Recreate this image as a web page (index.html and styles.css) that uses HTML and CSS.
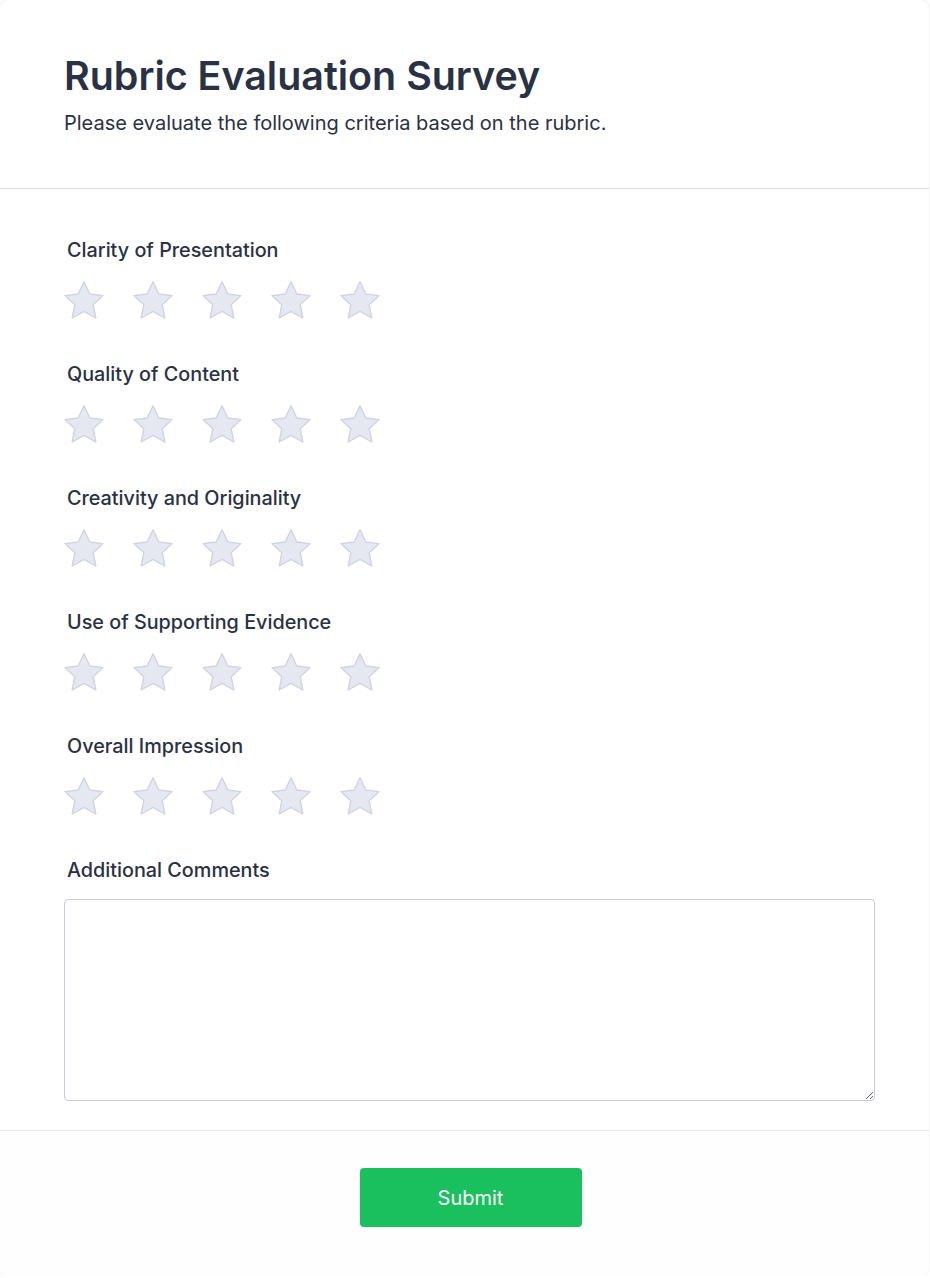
FILE: index.html
```html
<!DOCTYPE html>
<html lang="en">
<head>
<meta charset="utf-8">
<title>Rubric Evaluation Survey</title>
<link rel="stylesheet" href="styles.css">
</head>
<body>
<div class="card">
  <header class="card-header">
    <h1 class="title">Rubric Evaluation Survey</h1>
    <p class="subtitle">Please evaluate the following criteria based on the rubric.</p>
  </header>
  <main class="card-body">
    <div class="question">
      <label class="q-label">Clarity of Presentation</label>
      <div class="stars">
        <svg class="star" viewBox="2 1.7 20 20"><path d="M12 2.6l2.9 6.1 6.6.8-4.9 4.6 1.3 6.6L12 17.4l-5.9 3.3 1.3-6.6-4.9-4.6 6.6-.8z"/></svg>
        <svg class="star" viewBox="2 1.7 20 20"><path d="M12 2.6l2.9 6.1 6.6.8-4.9 4.6 1.3 6.6L12 17.4l-5.9 3.3 1.3-6.6-4.9-4.6 6.6-.8z"/></svg>
        <svg class="star" viewBox="2 1.7 20 20"><path d="M12 2.6l2.9 6.1 6.6.8-4.9 4.6 1.3 6.6L12 17.4l-5.9 3.3 1.3-6.6-4.9-4.6 6.6-.8z"/></svg>
        <svg class="star" viewBox="2 1.7 20 20"><path d="M12 2.6l2.9 6.1 6.6.8-4.9 4.6 1.3 6.6L12 17.4l-5.9 3.3 1.3-6.6-4.9-4.6 6.6-.8z"/></svg>
        <svg class="star" viewBox="2 1.7 20 20"><path d="M12 2.6l2.9 6.1 6.6.8-4.9 4.6 1.3 6.6L12 17.4l-5.9 3.3 1.3-6.6-4.9-4.6 6.6-.8z"/></svg>
      </div>
    </div>
    <div class="question">
      <label class="q-label">Quality of Content</label>
      <div class="stars">
        <svg class="star" viewBox="2 1.7 20 20"><path d="M12 2.6l2.9 6.1 6.6.8-4.9 4.6 1.3 6.6L12 17.4l-5.9 3.3 1.3-6.6-4.9-4.6 6.6-.8z"/></svg>
        <svg class="star" viewBox="2 1.7 20 20"><path d="M12 2.6l2.9 6.1 6.6.8-4.9 4.6 1.3 6.6L12 17.4l-5.9 3.3 1.3-6.6-4.9-4.6 6.6-.8z"/></svg>
        <svg class="star" viewBox="2 1.7 20 20"><path d="M12 2.6l2.9 6.1 6.6.8-4.9 4.6 1.3 6.6L12 17.4l-5.9 3.3 1.3-6.6-4.9-4.6 6.6-.8z"/></svg>
        <svg class="star" viewBox="2 1.7 20 20"><path d="M12 2.6l2.9 6.1 6.6.8-4.9 4.6 1.3 6.6L12 17.4l-5.9 3.3 1.3-6.6-4.9-4.6 6.6-.8z"/></svg>
        <svg class="star" viewBox="2 1.7 20 20"><path d="M12 2.6l2.9 6.1 6.6.8-4.9 4.6 1.3 6.6L12 17.4l-5.9 3.3 1.3-6.6-4.9-4.6 6.6-.8z"/></svg>
      </div>
    </div>
    <div class="question">
      <label class="q-label">Creativity and Originality</label>
      <div class="stars">
        <svg class="star" viewBox="2 1.7 20 20"><path d="M12 2.6l2.9 6.1 6.6.8-4.9 4.6 1.3 6.6L12 17.4l-5.9 3.3 1.3-6.6-4.9-4.6 6.6-.8z"/></svg>
        <svg class="star" viewBox="2 1.7 20 20"><path d="M12 2.6l2.9 6.1 6.6.8-4.9 4.6 1.3 6.6L12 17.4l-5.9 3.3 1.3-6.6-4.9-4.6 6.6-.8z"/></svg>
        <svg class="star" viewBox="2 1.7 20 20"><path d="M12 2.6l2.9 6.1 6.6.8-4.9 4.6 1.3 6.6L12 17.4l-5.9 3.3 1.3-6.6-4.9-4.6 6.6-.8z"/></svg>
        <svg class="star" viewBox="2 1.7 20 20"><path d="M12 2.6l2.9 6.1 6.6.8-4.9 4.6 1.3 6.6L12 17.4l-5.9 3.3 1.3-6.6-4.9-4.6 6.6-.8z"/></svg>
        <svg class="star" viewBox="2 1.7 20 20"><path d="M12 2.6l2.9 6.1 6.6.8-4.9 4.6 1.3 6.6L12 17.4l-5.9 3.3 1.3-6.6-4.9-4.6 6.6-.8z"/></svg>
      </div>
    </div>
    <div class="question">
      <label class="q-label">Use of Supporting Evidence</label>
      <div class="stars">
        <svg class="star" viewBox="2 1.7 20 20"><path d="M12 2.6l2.9 6.1 6.6.8-4.9 4.6 1.3 6.6L12 17.4l-5.9 3.3 1.3-6.6-4.9-4.6 6.6-.8z"/></svg>
        <svg class="star" viewBox="2 1.7 20 20"><path d="M12 2.6l2.9 6.1 6.6.8-4.9 4.6 1.3 6.6L12 17.4l-5.9 3.3 1.3-6.6-4.9-4.6 6.6-.8z"/></svg>
        <svg class="star" viewBox="2 1.7 20 20"><path d="M12 2.6l2.9 6.1 6.6.8-4.9 4.6 1.3 6.6L12 17.4l-5.9 3.3 1.3-6.6-4.9-4.6 6.6-.8z"/></svg>
        <svg class="star" viewBox="2 1.7 20 20"><path d="M12 2.6l2.9 6.1 6.6.8-4.9 4.6 1.3 6.6L12 17.4l-5.9 3.3 1.3-6.6-4.9-4.6 6.6-.8z"/></svg>
        <svg class="star" viewBox="2 1.7 20 20"><path d="M12 2.6l2.9 6.1 6.6.8-4.9 4.6 1.3 6.6L12 17.4l-5.9 3.3 1.3-6.6-4.9-4.6 6.6-.8z"/></svg>
      </div>
    </div>
    <div class="question">
      <label class="q-label">Overall Impression</label>
      <div class="stars">
        <svg class="star" viewBox="2 1.7 20 20"><path d="M12 2.6l2.9 6.1 6.6.8-4.9 4.6 1.3 6.6L12 17.4l-5.9 3.3 1.3-6.6-4.9-4.6 6.6-.8z"/></svg>
        <svg class="star" viewBox="2 1.7 20 20"><path d="M12 2.6l2.9 6.1 6.6.8-4.9 4.6 1.3 6.6L12 17.4l-5.9 3.3 1.3-6.6-4.9-4.6 6.6-.8z"/></svg>
        <svg class="star" viewBox="2 1.7 20 20"><path d="M12 2.6l2.9 6.1 6.6.8-4.9 4.6 1.3 6.6L12 17.4l-5.9 3.3 1.3-6.6-4.9-4.6 6.6-.8z"/></svg>
        <svg class="star" viewBox="2 1.7 20 20"><path d="M12 2.6l2.9 6.1 6.6.8-4.9 4.6 1.3 6.6L12 17.4l-5.9 3.3 1.3-6.6-4.9-4.6 6.6-.8z"/></svg>
        <svg class="star" viewBox="2 1.7 20 20"><path d="M12 2.6l2.9 6.1 6.6.8-4.9 4.6 1.3 6.6L12 17.4l-5.9 3.3 1.3-6.6-4.9-4.6 6.6-.8z"/></svg>
      </div>
    </div>
    <div class="question comments">
      <label class="q-label">Additional Comments</label>
      <textarea class="comment-box"></textarea>
    </div>
  </main>
  <footer class="card-footer">
    <button class="submit" type="button">Submit</button>
  </footer>
</div>
</body>
</html>
```

FILE: styles.css
```css
* { box-sizing: border-box; }

html, body {
  margin: 0;
  padding: 0;
  background: #ffffff;
}

body {
  font-family: Inter, "Noto Sans", sans-serif;
  color: #2a3142;
}

.card {
  width: 929px;
  background: #ffffff;
  border-radius: 8px;
  box-shadow: 0 0 2px rgba(40, 40, 80, 0.18);
  overflow: hidden;
}

.card-header {
  padding: 52px 64px 51px;
  border-bottom: 1px solid #dcd9ec;
}

.title {
  margin: 0;
  font-size: 39.4px;
  line-height: 48px;
  font-weight: 600;
  color: #2a3142;
}

.subtitle {
  margin: 9px 0 0;
  font-size: 20px;
  line-height: 28px;
  font-weight: 400;
  color: #2a3142;
}

.card-body {
  padding: 49px 64px 29px;
  display: flex;
  flex-direction: column;
  gap: 42px;
}

.question {
  display: flex;
  flex-direction: column;
  gap: 18px;
}

.comments {
  gap: 17px;
}

.q-label {
  padding-left: 3px;
  font-size: 19.8px;
  line-height: 24px;
  font-weight: 500;
  color: #2a3142;
}

.stars {
  display: flex;
  gap: 29px;
}

.star {
  width: 40px;
  height: 40px;
  fill: #e6e8f1;
  stroke: #d0d3e2;
  stroke-width: 0.7;
  stroke-linejoin: round;
}

.comment-box {
  display: block;
  width: 811px;
  height: 202px;
  border: 1px solid #c9cadb;
  border-radius: 4px;
  resize: vertical;
  font-family: inherit;
  font-size: 16px;
  padding: 10px;
}

.card-footer {
  border-top: 1px solid #e7e7ee;
  background: #fefefe;
  padding: 37px 0 49px 12px;
  display: flex;
  justify-content: center;
}

.submit {
  width: 222px;
  height: 59px;
  background: #1abf5e;
  color: #ffffff;
  border: none;
  border-radius: 4px;
  font-family: Inter, "Noto Sans", sans-serif;
  font-size: 20px;
  font-weight: 400;
}
```
